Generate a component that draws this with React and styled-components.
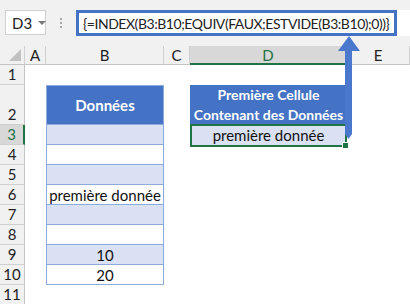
import styled, { createGlobalStyle } from "styled-components";

const GlobalStyle = createGlobalStyle`
  body {
    margin: 0;
    background: #ffffff;
    font-family: Lato, "Liberation Sans", sans-serif;
  }
`;

const rows = [
  { n: 3, value: "", striped: true },
  { n: 4, value: "", striped: false },
  { n: 5, value: "", striped: true },
  { n: 6, value: "première donnée", striped: false },
  { n: 7, value: "", striped: true },
  { n: 8, value: "", striped: false },
  { n: 9, value: "10", striped: true },
  { n: 10, value: "20", striped: false },
];

const columns = ["A", "B", "C", "D", "E"];

const App = () => {
  return (
    <Page>
      <GlobalStyle />
      <FormulaBar>
        <NameBox>
          D3
          <Caret />
        </NameBox>
        <Dots>
          <span />
          <span />
          <span />
        </Dots>
        <FormulaField>
          <FormulaBox>{"{=INDEX(B3:B10;EQUIV(FAUX;ESTVIDE(B3:B10);0))}"}</FormulaBox>
        </FormulaField>
      </FormulaBar>

      <Sheet>
        <Corner />
        {columns.map((c) => (
          <ColHeader key={c} $selected={c === "D"}>
            {c}
          </ColHeader>
        ))}

        <RowHeader>1</RowHeader>
        <Blank style={{ gridColumn: "2 / 7" }} />

        <RowHeader>2</RowHeader>
        <Blank />
        <TableHead>Données</TableHead>
        <Blank />
        <ResultHead>
          Première Cellule
          <br />
          Contenant des Données
        </ResultHead>
        <Blank />

        {rows.map((r) => (
          <Row key={r.n}>
            <RowHeader $selected={r.n === 3}>{r.n}</RowHeader>
            <Blank />
            <TableCell $striped={r.striped}>{r.value}</TableCell>
            <Blank />
            {r.n === 3 ? (
              <ResultCell>
                première donnée
                <Handle />
              </ResultCell>
            ) : (
              <Blank />
            )}
            <Blank />
          </Row>
        ))}

        <RowHeader>11</RowHeader>
        <Blank style={{ gridColumn: "2 / 7" }} />
      </Sheet>

      <Arrow width="24" height="104" viewBox="0 0 24 104">
        <polygon points="12,0 1,15 23,15" fill="#4a78cc" />
        <path d="M8 14 H15 V98 L11.5 103 L8 98 Z" fill="#4a78cc" />
      </Arrow>
    </Page>
  );
};

const Page = styled.div`
  position: relative;
  width: 410px;
  height: 304px;
  overflow: hidden;
  background: #ffffff;
`;

const FormulaBar = styled.div`
  height: 46px;
  box-sizing: border-box;
  padding-top: 10px;
  background: #f1f1f1;
  display: flex;
  align-items: flex-start;
`;

const NameBox = styled.div`
  margin-left: 5px;
  width: 41px;
  height: 25px;
  box-sizing: border-box;
  background: #ffffff;
  border: 1px solid #cfcfcf;
  display: flex;
  align-items: center;
  padding-left: 6px;
  gap: 6px;
  font-size: 15px;
  color: #222222;
`;

const Caret = styled.span`
  width: 0;
  height: 0;
  border-left: 4px solid transparent;
  border-right: 4px solid transparent;
  border-top: 4px solid #7a7a7a;
`;

const Dots = styled.div`
  width: 30px;
  height: 25px;
  display: flex;
  flex-direction: column;
  align-items: center;
  justify-content: center;
  gap: 2px;
  span {
    width: 2px;
    height: 2px;
    background: #a8a8a8;
  }
`;

const FormulaField = styled.div`
  flex: 1;
  height: 26px;
  background: #ffffff;
`;

const FormulaBox = styled.div`
  width: 321px;
  height: 26px;
  box-sizing: border-box;
  border: 3px solid #4472c4;
  display: flex;
  align-items: center;
  padding-left: 4px;
  font-size: 14px;
  letter-spacing: -0.45px;
  color: #222222;
  white-space: nowrap;
  overflow: hidden;
`;

const Sheet = styled.div`
  display: grid;
  grid-template-columns: 25px 21px 118px 26px 157px 1fr;
  grid-template-rows: 19px 20px 40px repeat(9, 20px);
  font-size: 15px;
  color: #111111;
`;

const Row = styled.div`
  display: contents;
`;

const Corner = styled.div`
  background: #f1f1f1;
  border-right: 1px solid #d0d0d0;
  border-bottom: 1px solid #c4c4c4;
  position: relative;
  &::after {
    content: "";
    position: absolute;
    right: 3px;
    bottom: 3px;
    border-left: 12px solid transparent;
    border-bottom: 12px solid #c2c2c2;
  }
`;

const ColHeader = styled.div`
  background: ${(p) => (p.$selected ? "#d8d8d8" : "#f1f1f1")};
  color: ${(p) => (p.$selected ? "#217346" : "#222222")};
  border-right: 1px solid #d0d0d0;
  border-bottom: ${(p) => (p.$selected ? "2px solid #217346" : "1px solid #c4c4c4")};
  display: flex;
  align-items: center;
  justify-content: center;
  font-size: 15px;
`;

const RowHeader = styled.div`
  background: ${(p) => (p.$selected ? "#d8d8d8" : "#f1f1f1")};
  color: ${(p) => (p.$selected ? "#217346" : "#222222")};
  border-right: ${(p) => (p.$selected ? "2px solid #217346" : "1px solid #c4c4c4")};
  border-bottom: 1px solid #d0d0d0;
  display: flex;
  align-items: flex-end;
  justify-content: center;
  padding-bottom: 1px;
  font-size: 15px;
`;

const Blank = styled.div`
  background: #ffffff;
`;

const TableHead = styled.div`
  background: #4472c4;
  border: 1px solid #8ea9db;
  color: #ffffff;
  font-weight: bold;
  display: flex;
  align-items: center;
  justify-content: center;
`;

const TableCell = styled.div`
  background: ${(p) => (p.$striped ? "#d9e1f2" : "#ffffff")};
  border-left: 1px solid #8ea9db;
  border-right: 1px solid #8ea9db;
  border-bottom: 1px solid #8ea9db;
  display: flex;
  align-items: center;
  justify-content: center;
`;

const ResultHead = styled.div`
  background: #4472c4;
  color: #ffffff;
  font-weight: bold;
  font-size: 14px;
  text-align: center;
  line-height: 20px;
  white-space: nowrap;
`;

const ResultCell = styled.div`
  position: relative;
  background: #d9e1f2;
  display: flex;
  align-items: center;
  justify-content: center;
  &::before {
    content: "";
    position: absolute;
    inset: -1px 0 -2px 0;
    border: 2px solid #217346;
  }
`;

const Handle = styled.span`
  position: absolute;
  right: -2px;
  bottom: -4px;
  width: 5px;
  height: 5px;
  background: #217346;
  border: 1px solid #ffffff;
`;

const Arrow = styled.svg`
  position: absolute;
  left: 337px;
  top: 36px;
`;

export default App;
